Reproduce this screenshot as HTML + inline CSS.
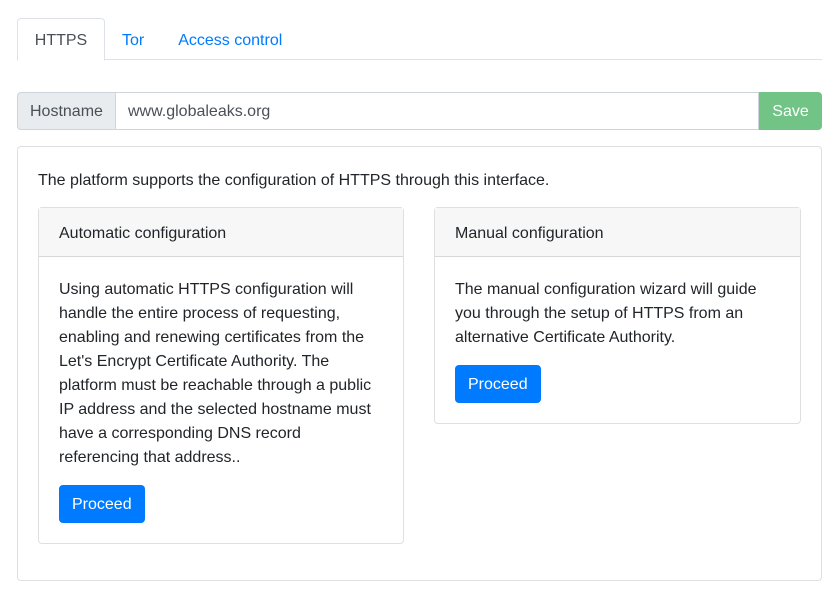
<!DOCTYPE html>
<html><head><meta charset="utf-8"><style>
*{box-sizing:border-box}
body{margin:0;background:#fff;font-family:"Liberation Sans",sans-serif;font-size:16px;color:#212529;line-height:1.5}
.wrap{position:absolute;left:17px;top:18px;width:805px}
.tabs{display:flex;border-bottom:1px solid #dee2e6;height:42px}
.tab{padding:2px 16px 0;line-height:40px;color:#007bff;border:1px solid transparent;border-radius:4px 4px 0 0;margin-bottom:-1px;height:43px}
.tab.active{color:#495057;border-color:#dee2e6 #dee2e6 #fff;background:#fff;width:88px;padding:2px 0 0;text-align:center}
.ig{display:flex;margin-top:32px;height:38px}
.addon{background:#e9ecef;border:1px solid #ced4da;border-radius:4px 0 0 4px;padding:1px 12px 0;line-height:36px;color:#495057;width:99px}
.inp{flex:1;border:1px solid #ced4da;border-left:none;padding:1px 12px 0;line-height:36px;color:#495057}
.save{background:#71c386;color:#fff;width:63px;text-align:center;line-height:38px;padding-top:1px;border-radius:0 4px 4px 0}
.card{border:1px solid rgba(0,0,0,.125);border-radius:4px;background:#fff}
.outer{margin-top:16px;padding:22px 20px 36px;height:435px}
.outer>p{margin:0 0 14px}
.row{display:flex;justify-content:space-between;align-items:flex-start}
.col{width:367px}
.hd{background:#f7f7f7;border-bottom:1px solid rgba(0,0,0,.125);padding:3px 20px 0;line-height:45px;height:49px}
.bd{padding:21px 20px 20px}
.bd p{margin:0 0 15px}
.btn{display:inline-block;background:#007bff;color:#fff;padding:2px 13px 0;line-height:36px;height:38px;border-radius:4px}
</style></head><body>
<div class="wrap">
<div class="tabs"><div class="tab active">HTTPS</div><div class="tab">Tor</div><div class="tab">Access control</div></div>
<div class="ig"><div class="addon">Hostname</div><div class="inp">www.globaleaks.org</div><div class="save">Save</div></div>
<div class="card outer">
<p>The platform supports the configuration of HTTPS through this interface.</p>
<div class="row">
<div class="card col" style="height:337px;width:366px"><div class="hd">Automatic configuration</div><div class="bd"><p>Using automatic HTTPS configuration will handle the entire process of requesting, enabling and renewing certificates from the Let's Encrypt Certificate Authority. The platform must be reachable through a public IP address and the selected hostname must have a corresponding DNS record referencing that address..</p><span class="btn">Proceed</span></div></div>
<div class="card col" style="height:217px"><div class="hd">Manual configuration</div><div class="bd"><p>The manual configuration wizard will guide you through the setup of HTTPS from an alternative Certificate Authority.</p><span class="btn">Proceed</span></div></div>
</div></div></div>
</body></html>
